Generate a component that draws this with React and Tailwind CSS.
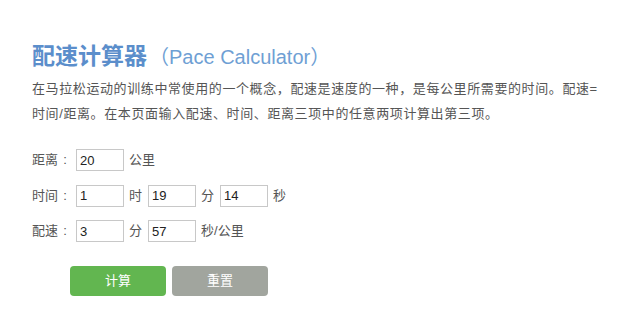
import { useState } from 'react';

const font = { fontFamily: '"Liberation Sans", "Noto Sans CJK SC", sans-serif' };

const Field = ({ value, onChange }) => (
  <input
    value={value}
    onChange={(e) => onChange(e.target.value)}
    className="w-[48px] h-[22px] border border-[#c8c8c8] px-[3px] text-[13px] text-[#222] outline-none"
  />
);

const Unit = ({ children }) => (
  <span className="ml-[5px] mr-[6px] text-[13px] text-[#555]">{children}</span>
);

const Label = ({ children }) => (
  <span className="flex w-[44px] text-[13px] text-[#555]">
    {children}
    <span className="w-[14px] text-center">:</span>
  </span>
);

const App = () => {
  const [distance, setDistance] = useState('20');
  const [hours, setHours] = useState('1');
  const [minutes, setMinutes] = useState('19');
  const [seconds, setSeconds] = useState('14');
  const [paceMin, setPaceMin] = useState('3');
  const [paceSec, setPaceSec] = useState('57');

  const reset = () => {
    setDistance('');
    setHours('');
    setMinutes('');
    setSeconds('');
    setPaceMin('');
    setPaceSec('');
  };

  return (
    <div style={font} className="w-[640px] h-[320px] bg-white pl-[32px] pt-[43px]">
      {/* Title */}
      <h1 className="flex items-baseline h-[26px] leading-[26px]">
        <span className="text-[23px] font-bold text-[#5b8ecb]">配速计算器</span>
        <span className="ml-[2px] text-[20px] text-[#6f9fd4]">（Pace Calculator）</span>
      </h1>

      {/* Description */}
      <p className="mt-[7px] text-[13px] leading-[25px] tracking-[0.6px] text-[#555] whitespace-nowrap">
        在马拉松运动的训练中常使用的一个概念，配速是速度的一种，是每公里所需要的时间。配速=
        <br />
        时间/距离。在本页面输入配速、时间、距离三项中的任意两项计算出第三项。
      </p>

      {/* Form */}
      <div className="mt-[23px] flex flex-col gap-[13.5px]">
        <div className="flex items-center h-[22px]">
          <Label>距离</Label>
          <Field value={distance} onChange={setDistance} />
          <Unit>公里</Unit>
        </div>
        <div className="flex items-center h-[22px]">
          <Label>时间</Label>
          <Field value={hours} onChange={setHours} />
          <Unit>时</Unit>
          <Field value={minutes} onChange={setMinutes} />
          <Unit>分</Unit>
          <Field value={seconds} onChange={setSeconds} />
          <Unit>秒</Unit>
        </div>
        <div className="flex items-center h-[22px]">
          <Label>配速</Label>
          <Field value={paceMin} onChange={setPaceMin} />
          <Unit>分</Unit>
          <Field value={paceSec} onChange={setPaceSec} />
          <Unit>秒/公里</Unit>
        </div>
      </div>

      {/* Buttons */}
      <div className="mt-[24px] ml-[38px] flex gap-[6px]">
        <button className="w-[96px] h-[30px] rounded-[4px] bg-[#62b650] text-white text-[13px]">
          计算
        </button>
        <button
          onClick={reset}
          className="w-[96px] h-[30px] rounded-[4px] bg-[#a1a59e] text-white text-[13px]"
        >
          重置
        </button>
      </div>
    </div>
  );
};

export default App;
